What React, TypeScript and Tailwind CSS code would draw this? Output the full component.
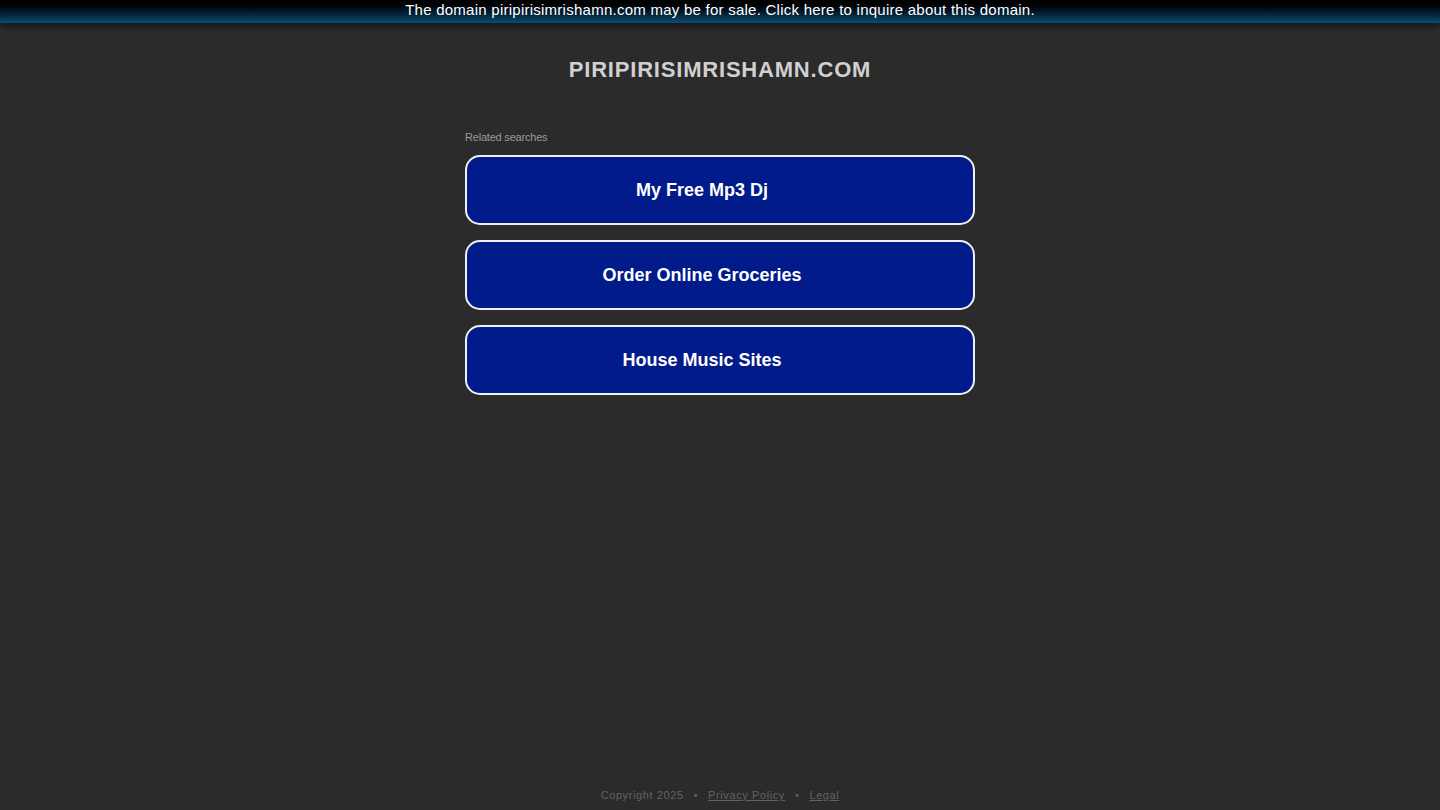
const searches = ["My Free Mp3 Dj", "Order Online Groceries", "House Music Sites"]

export default function App() {
  return (
    <div className="min-h-screen bg-[#2b2b2b] flex flex-col" style={{ fontFamily: '"Liberation Sans", Arial, sans-serif' }}>
      {/* Sale banner */}
      <div className="h-[23px] pb-[4px] bg-gradient-to-b from-[#000000] to-[#0b4d74] shadow-[0_3px_6px_rgba(0,0,0,0.55)] flex items-center justify-center">
        <span className="text-white text-[15px] tracking-[0.25px] leading-none">
          The domain piripirisimrishamn.com may be for sale. Click here to inquire about this domain.
        </span>
      </div>

      {/* Domain */}
      <h1 className="mt-[35px] text-center text-[22px] font-bold tracking-[0.8px] text-[#d0d0d0] leading-[24px]">
        PIRIPIRISIMRISHAMN.COM
      </h1>

      {/* Related searches */}
      <div className="w-[510px] mx-auto mt-[48px]">
        <div className="text-[11px] text-[#9a9a9a] leading-[14px] tracking-[-0.2px]">Related searches</div>
        <div className="mt-[11px] flex flex-col gap-[15px]">
          {searches.map((s) => (
            <a
              key={s}
              href="#"
              className="h-[70px] rounded-[15px] border-2 border-[#f0f0f0] bg-[#011b8b] flex items-center justify-center pr-[36px] text-white text-[18px] font-bold"
            >
              {s}
            </a>
          ))}
        </div>
      </div>

      <div className="flex-1" />

      {/* Footer */}
      <div className="pb-[8px] flex items-center justify-center gap-[10px] text-[11px] tracking-[0.6px] text-[#636363] leading-[14px]">
        <span>Copyright 2025</span>
        <span>•</span>
        <a href="#" className="underline">Privacy Policy</a>
        <span>•</span>
        <a href="#" className="underline">Legal</a>
      </div>
    </div>
  )
}
